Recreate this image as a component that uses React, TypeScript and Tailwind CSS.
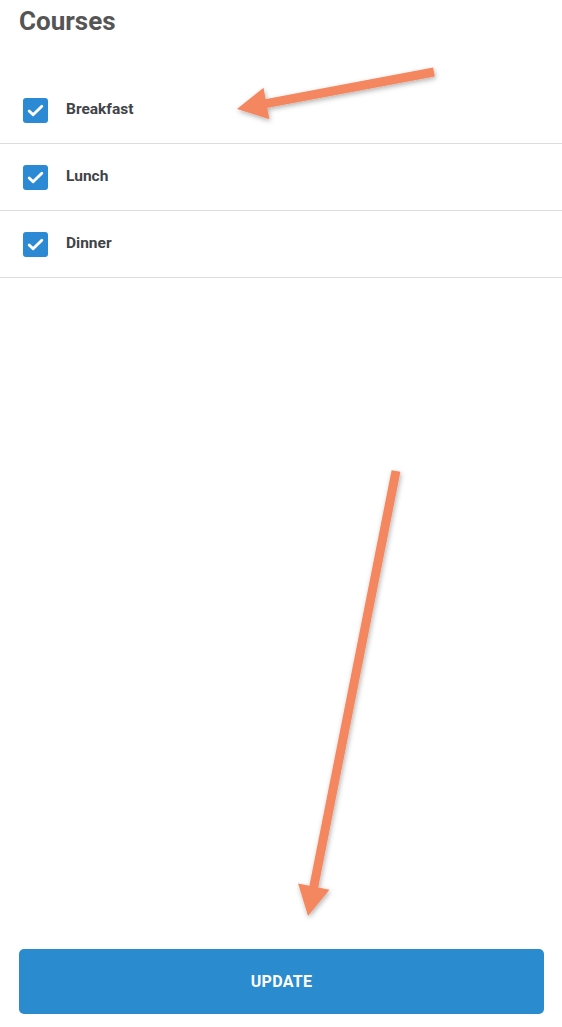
import { useState } from "react";

const courses = ["Breakfast", "Lunch", "Dinner"];

function Arrow({ x1, y1, x2, y2 }: { x1: number; y1: number; x2: number; y2: number }) {
  // shaft from tail (x1,y1) to head base, triangle head ending at (x2,y2)
  const dx = x2 - x1;
  const dy = y2 - y1;
  const len = Math.hypot(dx, dy);
  const ux = dx / len;
  const uy = dy / len;
  const bx = x2 - ux * 30;
  const by = y2 - uy * 30;
  const nx = -uy * 16;
  const ny = ux * 16;
  return (
    <g>
      <line x1={x1} y1={y1} x2={bx + ux * 2} y2={by + uy * 2} stroke="#f4875e" strokeWidth={9} />
      <polygon points={`${x2},${y2} ${bx + nx},${by + ny} ${bx - nx},${by - ny}`} fill="#f4875e" />
    </g>
  );
}

export default function App() {
  const [checked, setChecked] = useState<Record<string, boolean>>({
    Breakfast: true,
    Lunch: true,
    Dinner: true,
  });

  return (
    <main className="relative h-[1027px] flex flex-col bg-white font-['Roboto',sans-serif] overflow-hidden">

      {/* header */}
      <div className="h-[77px] px-[19px] pt-[4px]">
        <h1 className="text-[26px] font-bold text-[#555555] leading-[34px]">Courses</h1>
      </div>

      {/* list */}
      <ul>
        {courses.map((c) => (
          <li key={c} className="h-[67px] flex items-center border-b border-[#dcdcdc] pl-[23px]">
            <button
              onClick={() => setChecked({ ...checked, [c]: !checked[c] })}
              className={`w-[25px] h-[25px] rounded-[3px] flex items-center justify-center ${
                checked[c] ? "bg-[#2b8ad3]" : "border-2 border-[#999]"
              }`}
            >
              {checked[c] && (
                <svg width="19" height="19" viewBox="0 0 24 24" fill="none" stroke="white" strokeWidth="3.6" strokeLinecap="round" strokeLinejoin="round">
                  <path d="M4 12.5l5 5L20 6.5" />
                </svg>
              )}
            </button>
            <span className="ml-[18px] text-[15.5px] font-bold text-[#414447]">{c}</span>
          </li>
        ))}
      </ul>

      {/* bottom button */}
      <div className="mt-auto px-[19px] pr-[18px] pb-[13px]">
        <button className="w-full h-[65px] rounded-[5px] bg-[#2a8bcf] text-white text-[16px] font-bold tracking-[0.3px]">
          UPDATE
        </button>
      </div>

      {/* annotation arrows */}
      <svg className="absolute inset-0 pointer-events-none" width="562" height="1027">
        <defs>
          <filter id="sh" x="-20%" y="-20%" width="140%" height="140%">
            <feDropShadow dx="1" dy="2" stdDeviation="2.5" floodColor="#000" floodOpacity="0.3" />
          </filter>
        </defs>
        <g filter="url(#sh)">
          <Arrow x1={434} y1={72} x2={237} y2={109} />
          <Arrow x1={396} y1={471} x2={308} y2={916} />
        </g>
      </svg>
    </main>
  );
}
